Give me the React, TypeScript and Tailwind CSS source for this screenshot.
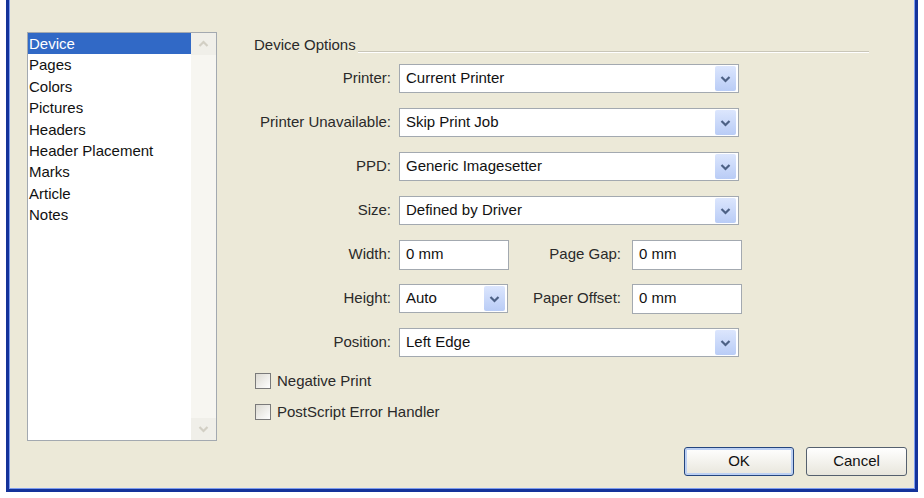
import React from "react";

const Chevron = ({ color = "#4d6185", up = false }: { color?: string; up?: boolean }) => (
  <svg width="11" height="8" viewBox="0 0 11 8">
    <polyline
      points={up ? "1.5,6 5.5,2 9.5,6" : "1.5,2 5.5,6 9.5,2"}
      fill="none"
      stroke={color}
      strokeWidth="2.2"
    />
  </svg>
);

function Select({ value, w }: { value: string; w: string }) {
  return (
    <div className={`flex h-[29px] items-center border border-[#a3a9b0] bg-white ${w}`}>
      <span className="flex-1 truncate pl-[6px] text-[#111]">{value}</span>
      <div className="mr-[2px] flex h-[25px] w-[21px] items-center justify-center rounded-[2px] bg-gradient-to-b from-[#dce6fd] to-[#b9ccf6]">
        <Chevron />
      </div>
    </div>
  );
}

function TextBox({ value }: { value: string }) {
  return (
    <div className="flex h-[30px] w-[110px] items-center border border-[#a3a9b0] bg-white pl-[6px] text-[#111]">
      {value}
    </div>
  );
}

function Label({ children, w }: { children: React.ReactNode; w: string }) {
  return <div className={`${w} shrink-0 text-right text-[#2a2a2a]`}>{children}</div>;
}

function Check({ label }: { label: string }) {
  return (
    <div className="flex h-[16px] items-center">
      <div className="h-[16px] w-[16px] border border-[#7a7a7a] bg-gradient-to-br from-[#dcdad2] to-white" />
      <span className="ml-[6px] text-[#2a2a2a]">{label}</span>
    </div>
  );
}

const items = [
  "Device",
  "Pages",
  "Colors",
  "Pictures",
  "Headers",
  "Header Placement",
  "Marks",
  "Article",
  "Notes",
];

export default function App() {
  return (
    <div className="h-[498px] w-[924px] overflow-hidden bg-white font-['Liberation_Sans',Arial,sans-serif] text-[15px]">
      <div className="ml-[6px] h-[492px] w-[912px] bg-[#14339a] px-[3px] pb-[3px]">
        <div className="flex h-full flex-col border-x border-b border-[#7f9ef0] bg-[#ECE9D8] pl-[17px] pr-[7px] pt-[32px]">
          <div className="flex h-[409px]">
            {/* list box */}
            <div className="flex h-[409px] w-[190px] border border-[#a3a9b0] bg-white">
              <div className="flex-1 leading-[21.4px] text-[#111]">
                {items.map((it, i) => (
                  <div
                    key={it}
                    className={
                      i === 0
                        ? "bg-[#3169c6] pl-[1px] text-white"
                        : "pl-[1px]"
                    }
                  >
                    {it}
                  </div>
                ))}
              </div>
              <div className="flex w-[25px] flex-col justify-between bg-[#f7f6f1]">
                <div className="flex h-[22px] items-center justify-center bg-[#f0efe9]">
                  <Chevron color="#d2cfc4" up />
                </div>
                <div className="flex h-[22px] items-center justify-center bg-[#f0efe9]">
                  <Chevron color="#d2cfc4" />
                </div>
              </div>
            </div>

            {/* options */}
            <div className="ml-[37px] flex flex-1 flex-col">
              <div className="mt-[4px] flex h-[18px] w-[615px] leading-[18px]">
                <span className="text-[#2a2a2a]">Device Options</span>
                <div className="mb-[2px] ml-[2px] flex-1 self-end border-b border-t-0 border-[#c9c6b8] shadow-[0_1px_0_#ffffff]" />
              </div>

              <div className="mt-[10px] flex flex-col gap-[15px]">
                <div className="flex items-center">
                  <Label w="w-[137px]">Printer:</Label>
                  <div className="ml-[8px]">
                    <Select value="Current Printer" w="w-[340px]" />
                  </div>
                </div>
                <div className="flex items-center">
                  <Label w="w-[137px]">Printer Unavailable:</Label>
                  <div className="ml-[8px]">
                    <Select value="Skip Print Job" w="w-[340px]" />
                  </div>
                </div>
                <div className="flex items-center">
                  <Label w="w-[137px]">PPD:</Label>
                  <div className="ml-[8px]">
                    <Select value="Generic Imagesetter" w="w-[340px]" />
                  </div>
                </div>
                <div className="flex items-center">
                  <Label w="w-[137px]">Size:</Label>
                  <div className="ml-[8px]">
                    <Select value="Defined by Driver" w="w-[340px]" />
                  </div>
                </div>
                <div className="flex h-[29px] items-center">
                  <Label w="w-[137px]">Width:</Label>
                  <div className="ml-[8px]">
                    <TextBox value="0 mm" />
                  </div>
                  <Label w="w-[112px]">Page Gap:</Label>
                  <div className="ml-[11px]">
                    <TextBox value="0 mm" />
                  </div>
                </div>
                <div className="flex h-[29px] items-center">
                  <Label w="w-[137px]">Height:</Label>
                  <div className="ml-[8px]">
                    <Select value="Auto" w="w-[109px]" />
                  </div>
                  <Label w="w-[113px]">Paper Offset:</Label>
                  <div className="ml-[11px]">
                    <TextBox value="0 mm" />
                  </div>
                </div>
                <div className="flex items-center">
                  <Label w="w-[137px]">Position:</Label>
                  <div className="ml-[8px]">
                    <Select value="Left Edge" w="w-[340px]" />
                  </div>
                </div>
              </div>

              <div className="ml-[1px] mt-[16px] flex flex-col gap-[15px]">
                <Check label="Negative Print" />
                <Check label="PostScript Error Handler" />
              </div>
            </div>
          </div>

          {/* buttons */}
          <div className="mt-[6px] flex justify-end gap-[12px]">
            <button className="h-[29px] w-[110px] rounded-[3px] border border-[#24457e] bg-gradient-to-b from-white to-[#e8e6dc] text-[#111] shadow-[inset_0_0_0_2px_#bcd0f3]">
              OK
            </button>
            <button className="h-[29px] w-[101px] rounded-[3px] border border-[#55606e] bg-gradient-to-b from-white to-[#e8e6dc] text-[#111]">
              Cancel
            </button>
          </div>
        </div>
      </div>
    </div>
  );
}
